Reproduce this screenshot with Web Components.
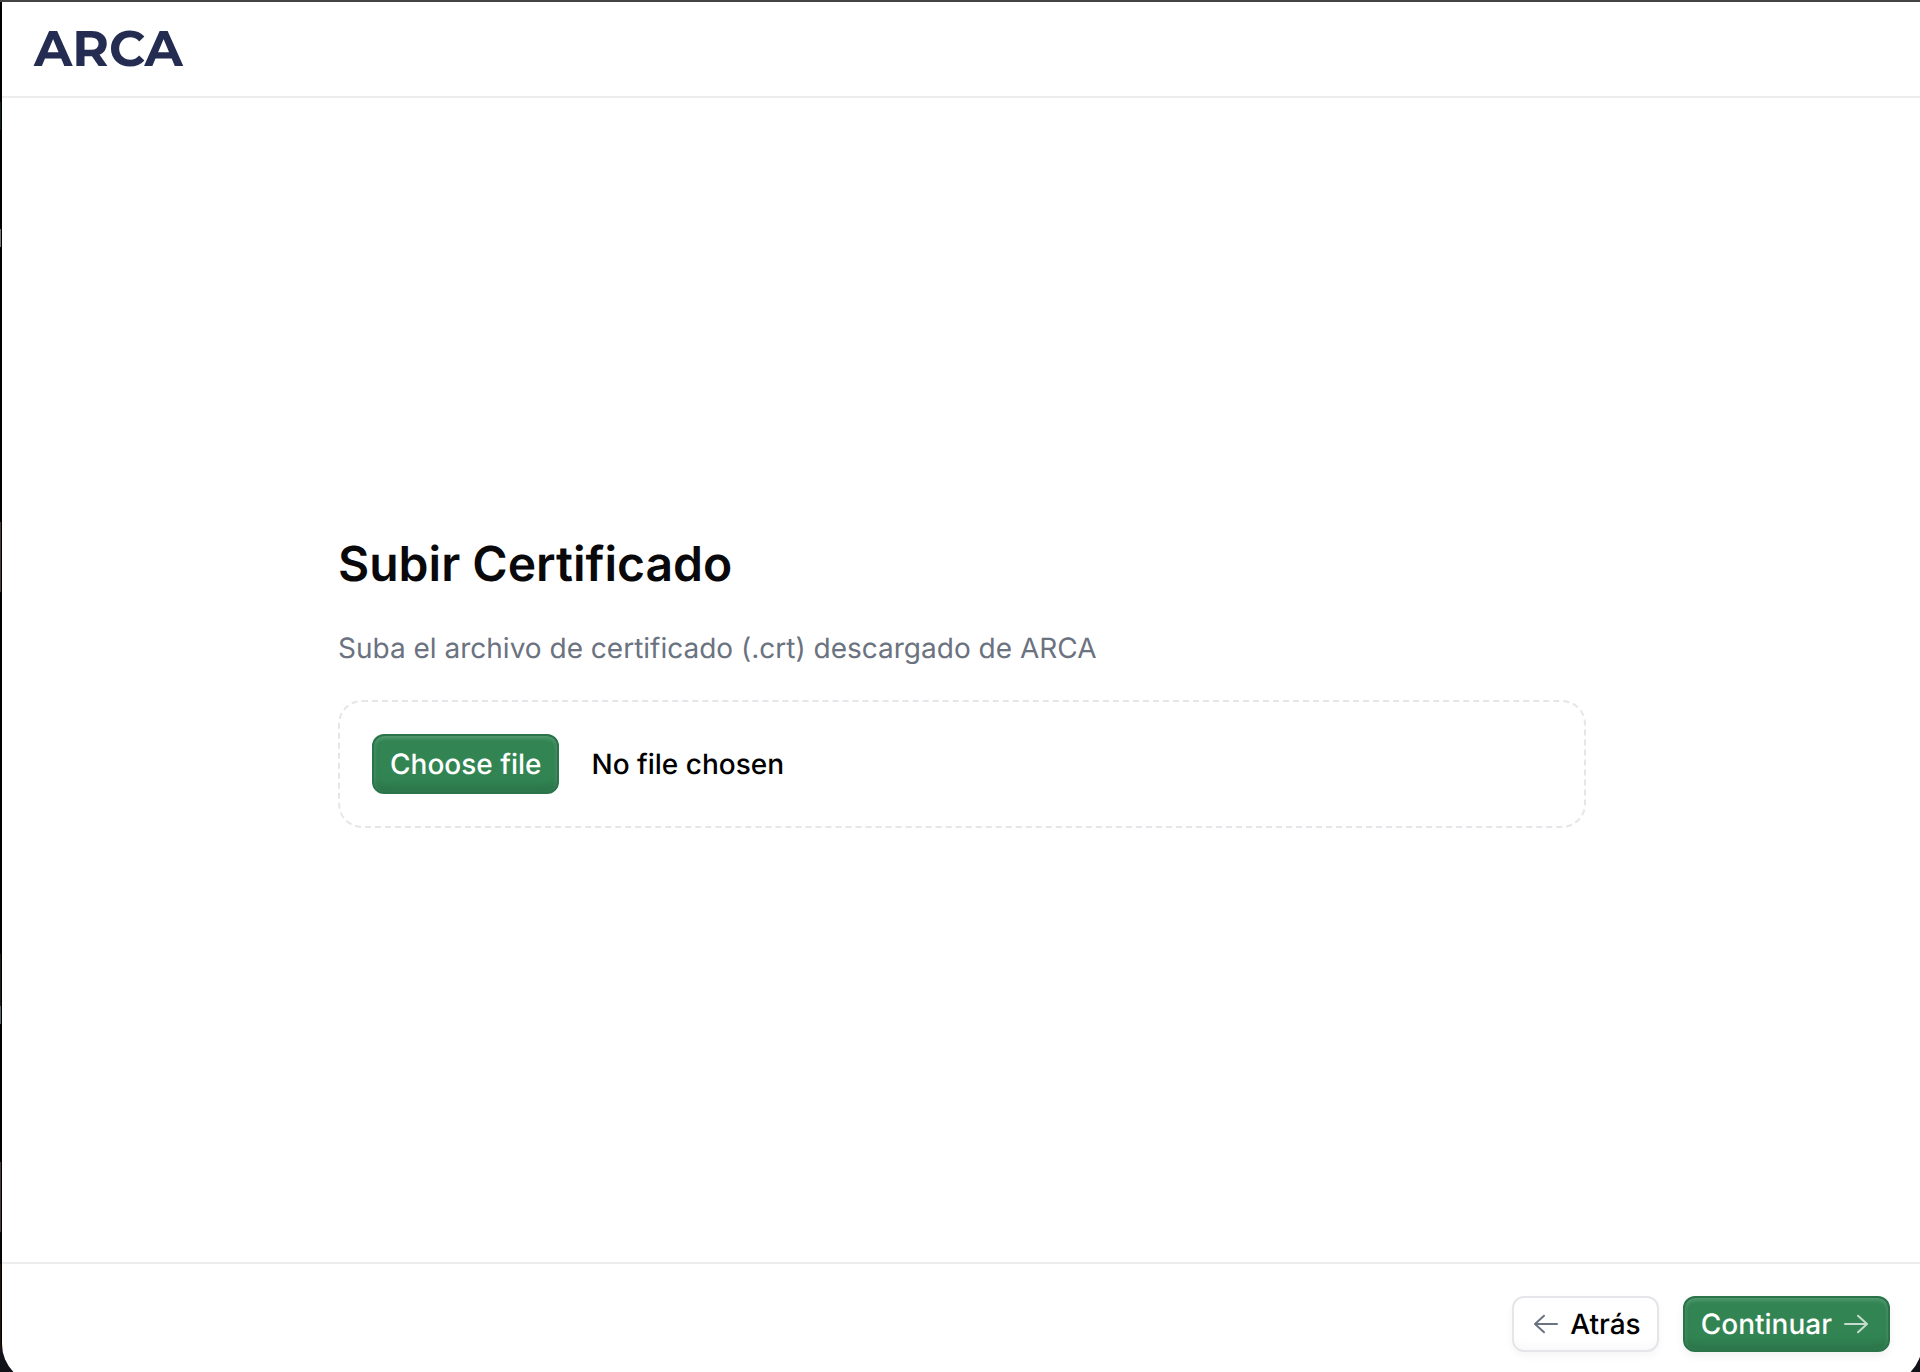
<!DOCTYPE html>
<html lang="es">
<head>
<meta charset="utf-8">
<meta name="viewport" content="width=device-width, initial-scale=1">
<title>ARCA</title>
<style>
  html, body { height: 100%; margin: 0; }
  body {
    overflow: hidden;
    background: #121318;
    font-family: Inter, "Liberation Sans", sans-serif;
    font-size: 28px;
    line-height: 40px;
    text-rendering: geometricPrecision;
    color: #09090b;
    --green: #328553;
    --green-dark: #2b744a;
    --line: #ededee;
    --edge: #e5e5ea;
    --muted: #6b7280;
  }
</style>
</head>
<body>
<app-window>
  <app-header slot="header">ARCA</app-header>
  <upload-step>
    <span slot="title">Subir Certificado</span>
    <span slot="description">Suba el archivo de certificado (.crt) descargado de ARCA</span>
    <file-picker></file-picker>
  </upload-step>
  <wizard-footer slot="footer">
    <ui-button variant="outline"><arrow-icon slot="start" direction="left"></arrow-icon>Atrás</ui-button>
    <ui-button variant="primary">Continuar<arrow-icon slot="end" direction="right"></arrow-icon></ui-button>
  </wizard-footer>
</app-window>
<script>
  const define = (name, markup, setup) => {
    const template = document.createElement('template');
    template.innerHTML = markup;
    customElements.define(name, class extends HTMLElement {
      constructor() {
        super();
        this.attachShadow({ mode: 'open' }).append(template.content.cloneNode(true));
        if (setup) setup(this.shadowRoot);
      }
    });
  };

  // Window frame; its right and bottom edges run slightly past the viewport.
  define('app-window', `
    <style>
      :host {
        display: block;
        box-sizing: border-box;
        height: calc(100vh + 12px);
        margin-right: -2px;
        padding: 2px 0 0 2px;
        background:
          linear-gradient(#444244, #444244) 0 0 / 100% 2px no-repeat,
          linear-gradient(#000, #000) 1px 0 / 1px 1345px no-repeat,
          linear-gradient(#000 0 102px, #10231f 102px 130px, #000 130px 229px, #777 229px 247px,
            #000 247px 522px, #4c3a36 522px 592px, #000 592px 954px, #1a2012 954px 1006px,
            #59656c 1006px 1024px, #000 1024px 1162px, #4c3a38 1162px 1232px,
            #06060c 1232px 1264px, #2a1200 1264px 1350px, #121318 1350px) 0 0 / 1px 100% no-repeat,
          #121318;
      }
      .frame {
        display: flex;
        flex-direction: column;
        height: 100%;
        background: #fff;
        border-radius: 0 0 40px 40px;
        overflow: hidden;
      }
      main { flex: 1; display: flex; align-items: center; justify-content: center; padding: 0 32px; }
    </style>
    <div class="frame">
      <slot name="header"></slot>
      <main><slot></slot></main>
      <slot name="footer"></slot>
    </div>`);

  define('app-header', `
    <style>
      :host { display: block; border-bottom: 2px solid var(--line); }
      header { display: flex; align-items: center; height: 94px; padding: 0 32px; }
      .logo { font-family: Montserrat, "DejaVu Sans", sans-serif; font-size: 50px; line-height: 56px; font-weight: 700; color: #252c52; }
    </style>
    <header><span class="logo"><slot></slot></span></header>`);

  define('upload-step', `
    <style>
      :host { display: block; flex: 1; max-width: 1248px; }
      section { display: flex; flex-direction: column; gap: 32px; }
      h1, p { margin: 0; }
      h1 { font-size: 48px; line-height: 64px; font-weight: 600; }
      p { color: var(--muted); }
    </style>
    <section>
      <h1><slot name="title"></slot></h1>
      <p><slot name="description"></slot></p>
      <slot></slot>
    </section>`);

  define('file-picker', `
    <style>
      :host { display: block; }
      .zone {
        display: flex;
        align-items: center;
        gap: 32px;
        padding: 32px;
        border: 2px dashed var(--edge);
        border-radius: 24px;
        font-weight: 500;
        color: #000;
      }
      input { position: absolute; width: 1px; height: 1px; opacity: 0; }
      label {
        padding: 8px 16px;
        border: 2px solid var(--green-dark);
        border-radius: 12px;
        background: var(--green);
        color: #fff;
        cursor: pointer;
        box-shadow: inset 0 2px 4px rgba(255, 255, 255, .2), inset 0 -10px 10px -4px var(--green-dark);
      }
      input:focus-visible + label { outline: 2px solid var(--green); outline-offset: 2px; }
    </style>
    <div class="zone">
      <input type="file" id="file" accept=".crt">
      <label for="file">Choose file</label>
      <output for="file">No file chosen</output>
    </div>`, root => {
    const input = root.querySelector('input');
    input.addEventListener('change', () => {
      root.querySelector('output').textContent = input.files.length ? input.files[0].name : 'No file chosen';
    });
  });

  define('wizard-footer', `
    <style>
      :host { display: block; border-top: 2px solid var(--line); }
      footer { display: flex; justify-content: flex-end; gap: 24px; padding: 32px; }
    </style>
    <footer><slot></slot></footer>`);

  define('ui-button', `
    <style>
      :host { display: block; }
      button {
        display: flex;
        align-items: center;
        gap: 8px;
        height: 56px;
        padding: 0 16px;
        border: 2px solid var(--edge);
        border-radius: 12px;
        background: #fff;
        color: #000;
        font: inherit;
        font-weight: 500;
        text-rendering: inherit;
        cursor: pointer;
        box-shadow: inset 0 -10px 10px -6px #f8f8f9, 0 4px 8px rgba(0, 0, 0, .04);
      }
      :host([variant="primary"]) button {
        border-color: var(--green-dark);
        background: var(--green);
        color: #fff;
        box-shadow: inset 0 2px 4px rgba(255, 255, 255, .2), inset 0 -10px 10px -4px var(--green-dark),
          0 4px 8px rgba(0, 0, 0, .06);
      }
      :host([variant="outline"]) { --icon: var(--muted); }
      :host([variant="primary"]) { --icon: #c3dccd; }
    </style>
    <button type="button"><slot name="start"></slot><span><slot></slot></span><slot name="end"></slot></button>`);

  define('arrow-icon', `
    <style>
      :host { display: block; width: 32px; height: 32px; }
      svg { display: block; fill: none; stroke: var(--icon); stroke-width: 2; stroke-linecap: round; stroke-linejoin: round; }
      :host([direction="left"]) svg { transform: scaleX(-1); }
    </style>
    <svg width="32" height="32" viewBox="0 0 32 32" aria-hidden="true"><path d="M5 16H27M18 7.7 27 16 18 24.3"/></svg>`);
</script>
</body>
</html>
